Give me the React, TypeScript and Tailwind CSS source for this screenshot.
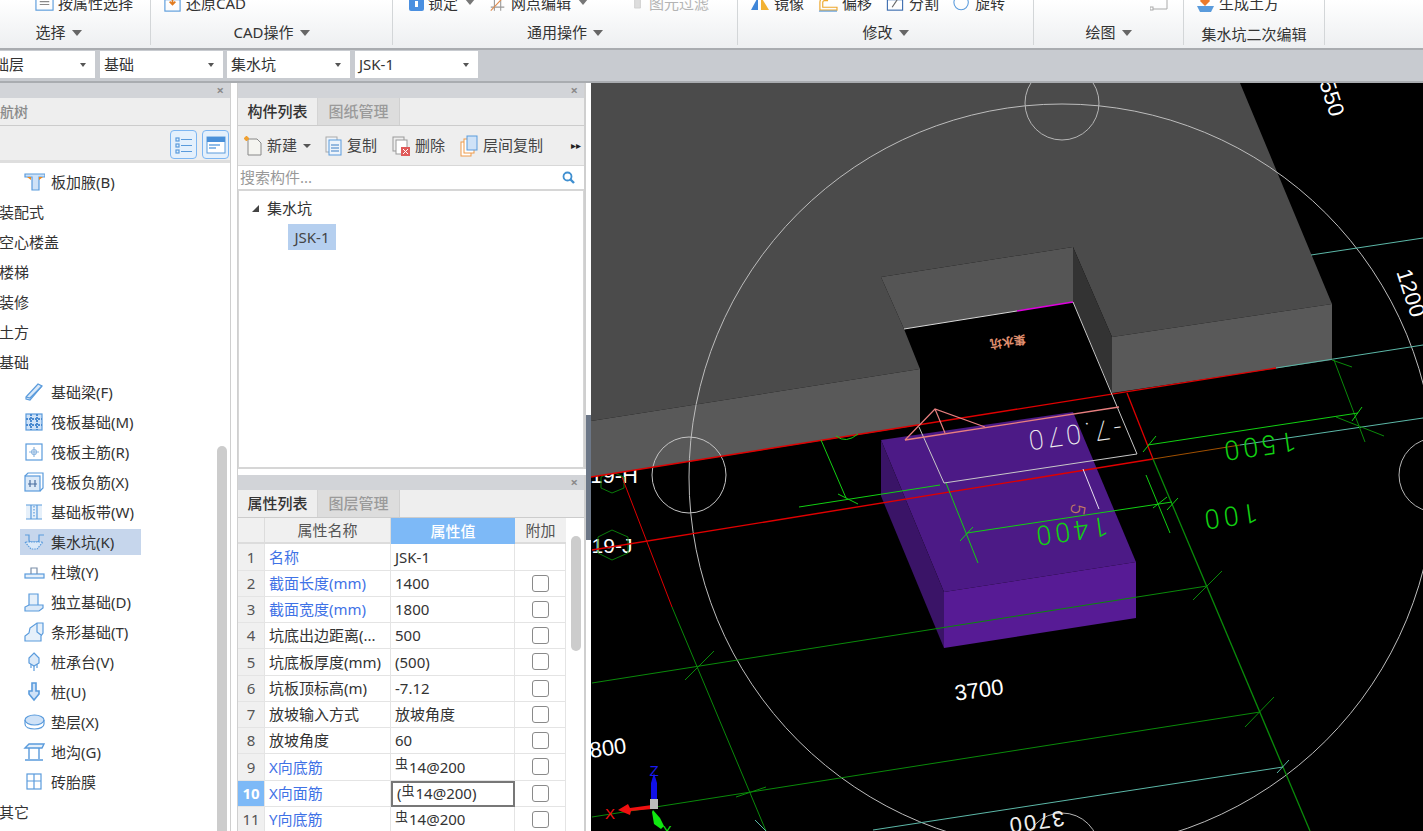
import React from "react";

const FONT = { fontFamily: '"Noto Sans", "Noto Sans CJK SC", sans-serif' };
const B = "#5a9bdc";

function Svg({ children, w = 20, h = 20, className = "" }: { children: React.ReactNode; w?: number; h?: number; className?: string }) {
  return (
    <svg width={w} height={h} viewBox="0 0 20 20" fill="none" stroke={B} strokeWidth="1.2" className={"shrink-0 " + className}>
      {children}
    </svg>
  );
}

const Caret = ({ c = "#666" }: { c?: string }) => <span className="inline-block w-0 h-0 border-l-[5px] border-r-[5px] border-t-[6px] border-l-transparent border-r-transparent" style={{ borderTopColor: c }} />;

function RibbonItem({ icon, label, caret, dim, w }: { icon: React.ReactNode; label: string; caret?: boolean; dim?: boolean; w: number }) {
  return (
    <div className="flex items-center gap-[4px] shrink-0" style={{ width: w }}>
      {icon}
      <span className={"text-[15px] leading-[20px] whitespace-nowrap " + (dim ? "text-[#b4b4b4]" : "text-[#333]")}>{label}</span>
      {caret && <span className="ml-[3px] -mt-[8px]"><Caret c="#777" /></span>}
    </div>
  );
}

function Group({ w, label, caret, pl, children, last, labelClass = "" }: { w: number; label: string; caret?: boolean; pl: number; children?: React.ReactNode; last?: boolean; labelClass?: string }) {
  return (
    <div className={"flex flex-col h-[45px] shrink-0 " + (last ? "" : "border-r border-[#d3d6d8]")} style={{ width: w }}>
      <div className="h-[21px]">
        <div className="flex -mt-[7px] items-center" style={{ paddingLeft: pl }}>{children}</div>
      </div>
      <div className={"h-[23px] flex items-center justify-center gap-[6px] text-[15px] text-[#333] whitespace-nowrap " + labelClass}>
        {label}
        {caret && <Caret c="#666" />}
      </div>
    </div>
  );
}

function Ribbon() {
  return (
    <div className="h-[48px] flex bg-gradient-to-b from-[#ffffff] to-[#edeff1] overflow-hidden shrink-0">
      <Group w={151} label="选择" caret pl={35} labelClass="pr-[33px]">
        <RibbonItem w={110} label="按属性选择" icon={<Svg w={19} h={19}><rect x="1" y="3" width="18" height="14" /><path d="M5 8h10M5 11h10" stroke="#888" /></Svg>} />
      </Group>
      <Group w={242} label="CAD操作" caret pl={12}>
        <RibbonItem w={100} label="还原CAD" icon={<Svg w={19} h={19}><rect x="2" y="6" width="16" height="12" /><path d="M10 2v9M7 8l3 3 3-3" stroke="#e07a1f" strokeWidth="1.8" /></Svg>} />
      </Group>
      <Group w={345} label="通用操作" caret pl={16}>
        <RibbonItem w={80} caret label="锁定" icon={<svg width="15" height="19" viewBox="0 0 15 19" className="shrink-0"><rect x="0" y="2" width="15" height="15" rx="2" fill="#4a8fe0" /><rect x="6" y="7" width="3" height="6" fill="#fff" /></svg>} />
        <RibbonItem w={143} caret label="网点编辑" icon={<Svg w={18} h={19}><path d="M2 14h15M6 4v14M13 4v14" stroke="#999" /><path d="M2 18L17 2" stroke="#e08a4a" /></Svg>} />
        <RibbonItem w={90} dim label="图元过滤" icon={<Svg w={13} h={19}><path d="M4 2h9v15H4z" stroke="#ccc" fill="#ddd" /></Svg>} />
      </Group>
      <Group w={296} label="修改" caret pl={11}>
        <RibbonItem w={68} label="镜像" icon={<svg width="21" height="19" viewBox="0 0 21 19" className="shrink-0"><path d="M9 3v13H2z" fill="#3f86d8" /><path d="M12 3v13h8z" fill="#f2b233" /></svg>} />
        <RibbonItem w={68} label="偏移" icon={<Svg w={21} h={19}><path d="M2 17V9q0-5 5-5h3v3H7q-2 0-2 2v5h15v3z" stroke="#eda72b" /><path d="M1 18h19" /></Svg>} />
        <RibbonItem w={68} label="分割" icon={<Svg w={20} h={19}><rect x="2" y="6" width="16" height="11" stroke="#3f6fb0" /><path d="M7 14L15 2" stroke="#666" /></Svg>} />
        <RibbonItem w={60} label="旋转" icon={<Svg w={18} h={19}><circle cx="9" cy="9" r="8" /></Svg>} />
      </Group>
      <Group w={150} label="绘图" caret pl={116}>
        <svg width="18" height="19" viewBox="0 0 18 19" fill="none" stroke="#aaa" className="shrink-0"><path d="M17 1v15H1" /><rect x="0" y="14" width="3" height="3" fill="#fff" /></svg>
      </Group>
      <Group w={141} label="集水坑二次编辑" pl={12} labelClass="pt-[3px]">
        <RibbonItem w={100} label="生成土方" icon={<svg width="19" height="19" viewBox="0 0 19 19" className="shrink-0"><path d="M9 0l5 7-5 5-5-5z" fill="#ec7a2a" /><path d="M1 12h17l-3 6H4z" fill="#5a9bdc" /></svg>} />
      </Group>
      <div className="flex-1" />
    </div>
  );
}

function Sel({ t, w, ml }: { t: string; w: number; ml: number }) {
  return (
    <div className="h-[27px] bg-white flex items-center pl-[4px] pr-[9px] justify-between text-[15px] text-[#333] shrink-0 overflow-hidden" style={{ width: w, marginLeft: ml }}>
      <span className="whitespace-nowrap">{t}</span>
      <span className="inline-block w-0 h-0 border-l-[3.5px] border-r-[3.5px] border-t-[4px] border-l-transparent border-r-transparent border-t-[#555]" />
    </div>
  );
}

const Closer = () => <span className="text-[#8a8a8a] text-[13px] leading-none font-bold">×</span>;

const I = {
  jiaye: <Svg w={22} h={20}><path d="M1 2h20v3h-6v13H8V5H1z" fill="#cfe2f7" /><path d="M3 5h4v3zM19 5h-4v3z" fill="#f08a1d" stroke="none" /></Svg>,
  liang: <Svg w={22} h={20}><path d="M2 15L14 2l4 2L6 18l-4-1z" fill="#dbe9f8" /><path d="M2 15l4 1L18 4" /></Svg>,
  fb: <Svg w={22} h={20}><rect x="2" y="2" width="16" height="16" fill="#cfe2f7" /><path d="M2 7h16M2 13h16M7 2v16M13 2v16" stroke="#4a8ad0" strokeWidth="2" strokeDasharray="2 1" /></Svg>,
  zj: <Svg w={22} h={20}><rect x="2" y="2" width="16" height="16" /><path d="M10 5v10M5 10h10" stroke="#8fb7e0" /><circle cx="10" cy="10" r="2.5" stroke="#8fb7e0" /></Svg>,
  fj: <Svg w={22} h={20}><rect x="1" y="4" width="15" height="15" fill="#dbe9f8" /><path d="M1 4l3-3h15v15l-3 3" /><path d="M6 8v7M11 8v7M4 12h9" stroke="#4a6fa0" /></Svg>,
  bd: <Svg w={22} h={20}><path d="M2 3h16v14H2z" fill="#e6f0fa" stroke="none" /><path d="M2 3h16M2 17h16M7 3v14M13 3v14" /><path d="M10 4v12" strokeDasharray="1.5 1.5" /></Svg>,
  jsk: <Svg w={22} h={20}><path d="M1 3h4v5q0 2 2 2h6q2 0 2-2V3h5" /><path d="M1 10l6 7h6l6-7z" fill="#dbe9f8" strokeDasharray="1.5 1" /></Svg>,
  zd: <Svg w={22} h={20}><rect x="1" y="12" width="19" height="4" fill="#e6f0fa" /><path d="M7 12V6h6v6" stroke="#7a8ea8" /></Svg>,
  dl: <Svg w={22} h={20}><path d="M5 13V2h9v11" fill="#e6f0fa" /><path d="M1 19v-4l4-2h14v3l-4 3z" fill="#dbe9f8" /></Svg>,
  tx: <Svg w={22} h={20}><path d="M1 19v-5l4-3 1-5 7-5h6v10l-2 3v5z" fill="#e6f0fa" /><path d="M13 1v9l4 3" /></Svg>,
  zct: <Svg w={22} h={20}><path d="M10 1l5 5v5l-5 3-5-3V6z" fill="#dbe9f8" /><path d="M7 12v4M10 14v5M13 12v4" /></Svg>,
  zhuang: <Svg w={22} h={20}><path d="M8 1h4v8h3v3l-5 6-5-6V9h3z" fill="#cfe2f7" strokeWidth="1.6" /></Svg>,
  dc: <Svg w={22} h={20}><ellipse cx="10.5" cy="8" rx="9.5" ry="5" fill="#cfe2f7" /><path d="M1 8v4c0 3 4 5 9.5 5s9.5-2 9.5-5V8" /></Svg>,
  dg: <Svg w={22} h={20}><path d="M1 6l4-4h15l-2 4H1zM5 6v11M15 6v11M1 18h18" fill="#e6f0fa" strokeWidth="1.4" /></Svg>,
  zt: <Svg w={22} h={20}><rect x="3" y="2" width="14" height="15" /><path d="M10 2v15M3 9h14" /></Svg>,
};

const tree: [string, React.ReactNode?, boolean?][] = [
  ["板加腋(B)", I.jiaye], ["装配式"], ["空心楼盖"], ["楼梯"], ["装修"], ["土方"], ["基础"],
  ["基础梁(F)", I.liang], ["筏板基础(M)", I.fb], ["筏板主筋(R)", I.zj], ["筏板负筋(X)", I.fj], ["基础板带(W)", I.bd],
  ["集水坑(K)", I.jsk, true], ["柱墩(Y)", I.zd], ["独立基础(D)", I.dl], ["条形基础(T)", I.tx], ["桩承台(V)", I.zct],
  ["桩(U)", I.zhuang], ["垫层(X)", I.dc], ["地沟(G)", I.dg], ["砖胎膜", I.zt], ["其它"],
];

function PanelHead() {
  return <div className="h-[15px] bg-[#d2d4d8] flex items-center justify-end pr-[6px] shrink-0"><Closer /></div>;
}

function LeftPanel() {
  return (
    <div className="w-[231px] shrink-0 flex flex-col border-r border-[#cfcfcf] relative">
      <PanelHead />
      <div className="h-[28px] bg-[#eeeeee] border-b border-[#cccccc] flex items-center text-[14px] font-medium text-[#8a8a8a] shrink-0 -ml-[16px] pl-[2px]"><span className="pl-[0px]">导航树</span></div>
      <div className="h-[37px] bg-[#eeeeee] border-b-[3px] border-[#dedede] flex items-start pt-[4px] justify-end gap-[5px] pr-[1px] shrink-0">
        <div className="w-[27px] h-[29px] rounded-[4px] border border-[#7db6f2] bg-[#e4f0fc] flex items-center justify-center">
          <svg width="18" height="18" viewBox="0 0 18 18" fill="none" stroke="#5a9bdc" strokeWidth="1.2"><rect x="1" y="2" width="3" height="3" /><rect x="1" y="8" width="3" height="3" /><rect x="1" y="14" width="3" height="3" /><path d="M6 3.5h11M6 9.5h11M6 15.5h11" /></svg>
        </div>
        <div className="w-[27px] h-[29px] rounded-[4px] border border-[#7db6f2] bg-[#e4f0fc] flex items-center justify-center">
          <svg width="20" height="18" viewBox="0 0 20 18"><rect x="1" y="1" width="18" height="16" fill="#fff" stroke="#5a9bdc" /><rect x="1" y="1" width="18" height="5" fill="#4a90d9" /><path d="M3 9h11M3 12h7" stroke="#6aa6e2" strokeWidth="1.4" /></svg>
        </div>
      </div>
      <div className="flex-1 pt-[4px] bg-white overflow-hidden relative">
        {tree.map(([t, ic, sel]) => (
          <div key={t} className="h-[30px] flex items-center text-[15px] text-[#333] whitespace-nowrap">
            {ic ? (
              <div className={"ml-[20px] h-[26px] flex items-center pl-[3px] w-[121px] gap-[6px] " + (sel ? "bg-[#c6d6ec]" : "")}>
                {ic}
                <span>{t}</span>
              </div>
            ) : (
              <span className="-ml-[1px]">{t}</span>
            )}
          </div>
        ))}
        <div className="absolute left-[217px] top-[283px] bottom-0 w-[10px] bg-[#cccccc] rounded-t-[5px]" />
      </div>
    </div>
  );
}

function Tabs({ a, b }: { a: string; b: string }) {
  return (
    <div className="h-[28px] bg-[#eeeeee] border-b border-[#cccccc] flex text-[15px] font-medium shrink-0">
      <div className="w-[80px] flex items-center justify-center text-[#333] border-r border-[#d4d4d4]">{a}</div>
      <div className="w-[82px] flex items-center justify-center text-[#9a9a9a] bg-[#dddddd] border-r border-[#d0d0d0]">{b}</div>
    </div>
  );
}

function Tool({ icon, t, w, caret }: { icon: React.ReactNode; t: string; w: number; caret?: boolean }) {
  return (
    <div className="flex items-center gap-[5px] shrink-0 whitespace-nowrap text-[15px] text-[#444]" style={{ width: w }}>
      {icon}
      <span>{t}</span>
      {caret && <span className="inline-block ml-[1px] w-0 h-0 border-l-[4px] border-r-[4px] border-t-[4px] border-l-transparent border-r-transparent border-t-[#555]" />}
    </div>
  );
}

function ListPanel() {
  return (
    <div className="h-[386px] flex flex-col border-r-2 border-[#cfcfcf] shrink-0">
      <PanelHead />
      <Tabs a="构件列表" b="图纸管理" />
      <div className="h-[39px] bg-[#eeeeee] flex items-center pl-[6px] shrink-0 relative">
        <Tool w={81} caret t="新建" icon={<svg width="18" height="20" viewBox="0 0 18 20" fill="#f4f4f0" stroke="#888" className="shrink-0"><path d="M4 3h9l4 4v12H4z" /><path d="M1 1l3 3M4 1L1 4M2.5 0v5M0 2.5h5" stroke="#f0a030" strokeWidth="1.4" /></svg>} />
        <Tool w={67} t="复制" icon={<svg width="17" height="20" viewBox="0 0 17 20" fill="#eef4fb" stroke="#5a9bdc" className="shrink-0"><rect x="1" y="1" width="11" height="15" stroke="#aaa" /><rect x="4" y="4" width="12" height="15" /><path d="M6 9h8M6 12h8M6 15h8" stroke="#3d7fc4" /></svg>} />
        <Tool w={68} t="删除" icon={<svg width="18" height="20" viewBox="0 0 18 20" fill="none" stroke="#999" className="shrink-0"><rect x="1" y="1" width="11" height="14" /><rect x="4" y="4" width="11" height="14" fill="#fff" /><rect x="9" y="11" width="9" height="9" fill="#e05a5a" stroke="none" /><path d="M11 13l5 5M16 13l-5 5" stroke="#fff" /></svg>} />
        <Tool w={100} t="层间复制" icon={<svg width="18" height="22" viewBox="0 0 18 22" className="shrink-0"><rect x="1" y="7" width="10" height="14" fill="#fff" stroke="#ee9a4a" /><rect x="4" y="4" width="10" height="14" fill="#fff" stroke="#ee9a4a" /><rect x="7" y="1" width="10" height="14" fill="#cfe2f7" stroke="#5a9bdc" /></svg>} />
        <span className="absolute left-[333px] top-[13px] text-[10px] leading-[12px] text-[#222]">▸▸</span>
      </div>
      <div className="h-[24px] bg-white border-t border-[#d8d8d8] flex items-center justify-between pl-[2px] pr-[9px] text-[15px] text-[#999] shrink-0">
        <span>搜索构件...</span>
        <svg width="13" height="13" viewBox="0 0 13 13" fill="none" stroke="#3f8fd0" strokeWidth="1.8"><circle cx="5.5" cy="5.5" r="4" /><path d="M8.5 8.5L12 12" strokeWidth="2.4" /></svg>
      </div>
      <div className="flex-1 bg-white border-t-2 border-x border-b-2 border-[#d6d6d6] pt-[4px] text-[15px] text-[#333] flex flex-col">
        <div className="h-[26px] flex items-center pl-[13px] gap-[8px]">
          <span className="w-0 h-0 border-b-[7px] border-l-[7px] border-b-[#444] border-l-transparent" />
          <span>集水坑</span>
        </div>
        <div className="pl-[49px] pt-[3px]">
          <div className="w-[48px] h-[26px] bg-[#b5cfef] flex items-center justify-center text-[#444]">JSK-1</div>
        </div>
      </div>
    </div>
  );
}

const Reb = () => <span className="text-[13px] relative -top-[3px] mr-[1px]">虫</span>;

type Row = { n: string; blue?: boolean; v: React.ReactNode; nc?: boolean; sel?: boolean };
const rows: Row[] = [
  { n: "名称", blue: true, v: "JSK-1", nc: true },
  { n: "截面长度(mm)", blue: true, v: "1400" },
  { n: "截面宽度(mm)", blue: true, v: "1800" },
  { n: "坑底出边距离(...", v: "500" },
  { n: "坑底板厚度(mm)", v: "(500)" },
  { n: "坑板顶标高(m)", v: "-7.12" },
  { n: "放坡输入方式", v: "放坡角度" },
  { n: "放坡角度", v: "60" },
  { n: "X向底筋", blue: true, v: <><Reb />14@200</> },
  { n: "X向面筋", blue: true, v: <>(<Reb />14@200)</>, sel: true },
  { n: "Y向底筋", blue: true, v: <><Reb />14@200</> },
];

function PropPanel() {
  return (
    <div className="flex-1 mt-[6px] flex flex-col border-r-2 border-[#cfcfcf] overflow-hidden min-h-0">
      <PanelHead />
      <Tabs a="属性列表" b="图层管理" />
      <div className="flex-1 bg-white relative overflow-hidden">
        <div className="grid grid-cols-[27px_126px_124px_51px] auto-rows-[26.25px] text-[15px] text-[#333]">
          <div className="bg-[#f0f0f0] border-r border-b-2 border-[#dcdcdc]" />
          <div className="bg-[#f0f0f0] border-r border-b-2 border-[#dcdcdc] flex items-center justify-center text-[#555]">属性名称</div>
          <div className="bg-[#7db9f7] flex items-center justify-center text-white font-medium">属性值</div>
          <div className="bg-[#f0f0f0] border-b-2 border-[#dcdcdc] flex items-center justify-center text-[#555]">附加</div>
          {rows.map((r, i) => (
            <React.Fragment key={i}>
              <div className={"flex items-center justify-center text-[15px] border-r border-b border-[#e4e4e4] " + (r.sel ? "bg-[#7db9f7] text-white font-bold" : "bg-[#f0f0f0] text-[#555]")}>{i + 1}</div>
              <div className={"flex items-center pl-[4px] border-r border-b border-[#e4e4e4] whitespace-nowrap overflow-hidden " + (r.blue ? "text-[#3f72e6]" : "")}>{r.n}</div>
              <div className={"flex items-center pl-[4px] whitespace-nowrap " + (r.sel ? "border-2 border-[#777]" : "border-r border-b border-[#e4e4e4]")}>{r.v}</div>
              <div className="flex items-center justify-center border-r border-b border-[#e4e4e4]">
                {!r.nc && <span className="w-[17px] h-[17px] rounded-[3px] border border-[#8a8a8a] bg-white" />}
              </div>
            </React.Fragment>
          ))}
        </div>
        <div className="absolute left-[333px] top-[18px] w-[10px] h-[115px] bg-[#cccccc] rounded-[5px]" />
      </div>
    </div>
  );
}

function T({ x, y, r, s, c, ls = 0, f = "Liberation Sans", w = 400, children }: { x: number; y: number; r: number; s: number; c: string; ls?: number; f?: string; w?: number; children: React.ReactNode }) {
  return (
    <text transform={`translate(${x} ${y}) rotate(${r})`} textAnchor="middle" dominantBaseline="central" fontSize={s} fontWeight={w} fill={c} letterSpacing={ls} fontFamily={f + ", sans-serif"}>
      {children}
    </text>
  );
}

function L({ d, c, w = 1 }: { d: string; c: string; w?: number }) {
  return <path d={d} stroke={c} strokeWidth={w} fill="none" />;
}

const DG = "#0a8a0a";
const BG = "#12d012";
const CY = "#5cb8a8";
const RD = "#e00000";
const PK = "#e87f7f";

function Canvas() {
  return (
    <div className="flex-1 bg-black overflow-hidden">
      <svg width="832" height="748" viewBox="591 83 832 748" className="block">
        <rect x="591" y="83" width="832" height="748" fill="#000" />

        <T x={614} y={475} r={0} s={22} c="#ffffff">19-H</T>
        <T x={612} y={545} r={0} s={21} c="#ffffff">19-J</T>
        <polygon points="601,477 612,472 624,477 624,488 612,493 601,488" stroke="#0a7a0a" fill="none" />
        <polygon points="598,537 612,530 628,537 628,553 612,560 598,553" stroke="#0a7a0a" fill="none" />

        <polygon points="591,83 1240,83 1332,304 1112,337 1073,247 881,277 904,329 920,369 591,421" fill="#4b4b4b" />
        <polygon points="591,421 920,369 920,425 591,477" fill="#595959" />
        <polygon points="1112,337 1332,304 1332,360 1112,393" fill="#595959" />
        <polygon points="881,277 1073,247 1073,302 904,329" fill="#555555" />
        <polygon points="1073,247 1112,337 1112,393 1073,302" fill="#333333" />

        <polygon points="881,440 1073,412 1136,562 944,592" fill="#4c1a86" />
        <polygon points="944,592 1136,562 1136,618 944,648" fill="#571b95" />
        <polygon points="881,440 944,592 944,648 881,496" fill="#3a1467" />

        <circle cx="1062" cy="477" r="373" stroke="#bdbdbd" fill="none" />
        <circle cx="1062" cy="103" r="37" stroke="#b5b5b5" fill="none" />
        <ellipse cx="689" cy="475" rx="37" ry="38" stroke="#c5c5c5" fill="none" />
        <circle cx="1436" cy="475" r="37" stroke="#b5b5b5" fill="none" />
        <circle cx="1062" cy="850" r="37" stroke="#b5b5b5" fill="none" />

        <L d="M1311 255L1423 238" c={CY} />
        <L d="M591 477L1276 368" c={RD} w={1.4} />
        <L d="M1276 368L1423 345" c={CY} />
        <L d="M592 550L1153 459" c={RD} w={1.4} />
        <L d="M1153 459L1240 445" c="#a05000" />
        <L d="M1240 445L1423 418" c={CY} />
        <L d="M622 477L672 607" c={RD} />
        <L d="M672 607L766 831" c={DG} />
        <L d="M1127 393L1153 459" c={RD} w={1.3} />
        <L d="M1153 459L1310 831" c={DG} w={1.3} />
        <L d="M1334 360L1365 442" c={DG} />
        <L d="M1336 417L1384 436" c={DG} />
        <L d="M1332 360L1352 367" c={DG} />

        <L d="M592 683L1207 586" c={DG} />
        <L d="M1193 600L1222 571" c={DG} />
        <L d="M685 680L714 651" c={DG} />
        <L d="M592 817L1260 712" c={DG} />
        <L d="M1245 727L1274 697" c={DG} />
        <L d="M873 830L1283 767" c={CY} />
        <L d="M1277 773L1289 760" c={CY} />
        <L d="M755 820L766 831" c={CY} />
        <L d="M736 797L766 787" c={DG} />

        <L d="M967 533L1172 502" c={BG} />
        <L d="M946 483L978 563" c={BG} />
        <L d="M960 541L973 527" c={BG} />
        <L d="M1146 475L1170 533" c={BG} />
        <L d="M1153 508L1167 497" c={BG} />
        <L d="M1167 510L1178 498" c={BG} />
        <L d="M799 507L940 485" c={BG} />
        <L d="M821 440L846 498" c={BG} />
        <L d="M838 494L858 504" c={BG} />
        <path d="M836 436q10 8 22-2" stroke={BG} fill="none" />
        <L d="M1148 445L1358 413" c={BG} />
        <L d="M1143 452L1156 436" c={BG} />
        <L d="M1352 421L1362 407" c={BG} />

        <L d="M904 329L1017 311" c="#d8d8d8" />
        <L d="M1017 311L1073 302" c="#e000e0" w={1.4} />
        <L d="M1073 302L1137 454L944 483L919 427" c="#c8c8c8" />
        <L d="M1083 469L1099 509" c="#e8e0f0" />
        <L d="M905 440L1119 407" c={PK} w={1.3} />
        <L d="M905 440L935 409L985 427M935 409L945 433" c={PK} w={1.2} />
        <T x={1078} y={509} r={100} s={20} c="#c07a62" f="Roboto" w={300}>5</T>

        <T x={1073} y={434} r={172} s={27} c="#f0f0f0" ls={4} f="Roboto" w={200}>-7.070</T>
        <T x={1070} y={531} r={172} s={27} c={BG} ls={4} f="Roboto" w={300}>1400</T>
        <T x={1258} y={446} r={172} s={27} c={BG} ls={4} f="Roboto" w={300}>1500</T>
        <T x={1229} y={516} r={172} s={27} c={BG} ls={4} f="Roboto" w={300}>100</T>
        <T x={1008} y={343} r={172} s={12} c="#e09070" f="Noto Sans CJK SC" w={700}>集水坑</T>
        <T x={979} y={690} r={-8} s={22} c="#ffffff">3700</T>
        <T x={1332} y={98} r={72} s={22} c="#ffffff">550</T>
        <T x={1411} y={293} r={72} s={22} c="#ffffff">1200</T>
        <T x={608} y={748} r={-8} s={22} c="#ffffff">800</T>
        <T x={1036} y={822} r={172} s={22} c="#eeeeee" ls={2}>3700</T>

        <polygon points="651,783 654,773 657,783 657,802 651,802" fill="#1010e8" />
        <polygon points="652,805 630,808 628,804 618,810 630,815 631,811 652,809" fill="#f01010" />
        <polygon points="653,810 660,818 664,826 661,829 654,824 652,812" fill="#10e810" />
        <rect x="650" y="799" width="8" height="10" fill="#bbbbbb" />
        <T x={654} y={770} r={0} s={15} c="#1a1af0">Z</T>
        <T x={610} y={813} r={0} s={15} c="#f01010">X</T>
        <T x={667} y={830} r={0} s={13} c="#10e810">Y</T>
      </svg>
    </div>
  );
}

export default function App() {
  return (
    <div className="w-[1423px] h-[831px] overflow-hidden flex flex-col bg-white" style={FONT}>
      <Ribbon />
      <div className="h-[2px] bg-[#a9acb0] shrink-0" />
      <div className="h-[33px] bg-[#c8cbd0] border-b-2 border-[#a9acb0] flex items-center shrink-0 pb-[2px]">
        <Sel t="基础层" w={120} ml={-25} />
        <Sel t="基础" w={123} ml={5} />
        <Sel t="集水坑" w={123} ml={4} />
        <Sel t="JSK-1" w={123} ml={5} />
      </div>
      <div className="flex-1 flex min-h-0">
        <LeftPanel />
        <div className="w-[6px] shrink-0 bg-white" />
        <div className="w-[349px] shrink-0 flex flex-col min-h-0 border-l border-[#cfcfcf]">
          <ListPanel />
          <PropPanel />
        </div>
        <div className="w-[5px] shrink-0 bg-white relative">
          <div className="absolute left-0 top-[332px] h-[125px] w-[5px] bg-[#6c7787]" />
        </div>
        <Canvas />
      </div>
    </div>
  );
}
